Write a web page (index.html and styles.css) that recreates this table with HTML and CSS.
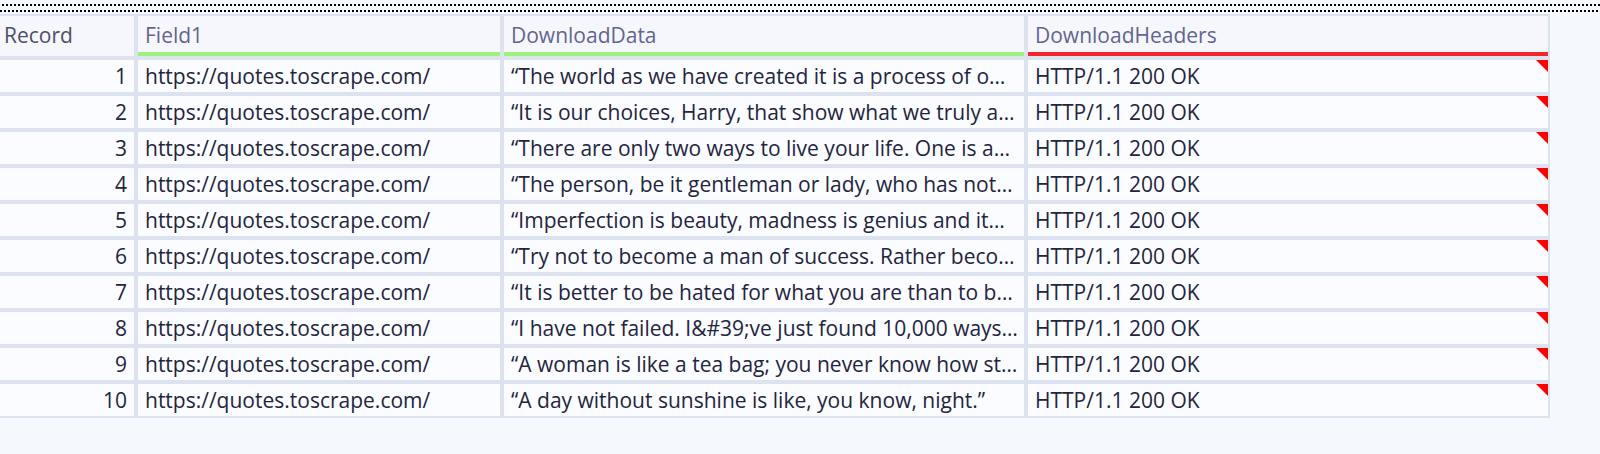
FILE: index.html
```html
<!DOCTYPE html>
<html lang="en">
<head>
<meta charset="utf-8">
<title>Results</title>
<link rel="stylesheet" href="styles.css">
</head>
<body>
<div class="dots dots-a"></div>
<div class="dots dots-b"></div>
<div class="grid">
  <div class="hcell rec">Record</div>
  <div class="hcell ok">Field1</div>
  <div class="hcell ok">DownloadData</div>
  <div class="hcell bad">DownloadHeaders</div>

  <div class="cell num">1</div><div class="cell">https://quotes.toscrape.com/</div><div class="cell">“The world as we have created it is a process of our thinking. It cannot be changed without changing our thinking.”</div><div class="cell flag">HTTP/1.1 200 OK</div>
  <div class="cell num">2</div><div class="cell">https://quotes.toscrape.com/</div><div class="cell">“It is our choices, Harry, that show what we truly are, far more than our abilities.”</div><div class="cell flag">HTTP/1.1 200 OK</div>
  <div class="cell num">3</div><div class="cell">https://quotes.toscrape.com/</div><div class="cell">“There are only two ways to live your life. One is as though nothing is a miracle. The other is as though everything is a miracle.”</div><div class="cell flag">HTTP/1.1 200 OK</div>
  <div class="cell num">4</div><div class="cell">https://quotes.toscrape.com/</div><div class="cell">“The person, be it gentleman or lady, who has not pleasure in a good novel, must be intolerably stupid.”</div><div class="cell flag">HTTP/1.1 200 OK</div>
  <div class="cell num">5</div><div class="cell">https://quotes.toscrape.com/</div><div class="cell">“Imperfection is beauty, madness is genius and it&amp;#39;s better to be absolutely ridiculous than absolutely boring.”</div><div class="cell flag">HTTP/1.1 200 OK</div>
  <div class="cell num">6</div><div class="cell">https://quotes.toscrape.com/</div><div class="cell">“Try not to become a man of success. Rather become a man of value.”</div><div class="cell flag">HTTP/1.1 200 OK</div>
  <div class="cell num">7</div><div class="cell">https://quotes.toscrape.com/</div><div class="cell">“It is better to be hated for what you are than to be loved for what you are not.”</div><div class="cell flag">HTTP/1.1 200 OK</div>
  <div class="cell num">8</div><div class="cell">https://quotes.toscrape.com/</div><div class="cell">“I have not failed. I&amp;#39;ve just found 10,000 ways that won&amp;#39;t work.”</div><div class="cell flag">HTTP/1.1 200 OK</div>
  <div class="cell num">9</div><div class="cell">https://quotes.toscrape.com/</div><div class="cell">“A woman is like a tea bag; you never know how strong it is until it&amp;#39;s in hot water.”</div><div class="cell flag">HTTP/1.1 200 OK</div>
  <div class="cell num">10</div><div class="cell">https://quotes.toscrape.com/</div><div class="cell">“A day without sunshine is like, you know, night.”</div><div class="cell flag">HTTP/1.1 200 OK</div>
</div>
</body>
</html>
```

FILE: styles.css
```css
html, body {
  margin: 0;
  padding: 0;
  background: #f5f8fd;
}
body {
  padding-top: 4px;
  font-family: "Open Sans", "Noto Sans", sans-serif;
  font-size: 21px;
}
.dots {
  height: 2px;
  width: 1600px;
}
.dots-a {
  background: repeating-linear-gradient(to right, transparent 0 2px, #000 2px 4px);
  margin-bottom: 4px;
}
.dots-b {
  background: repeating-linear-gradient(to right, #000 0 2px, transparent 2px 4px);
  margin-bottom: 2px;
}
.grid {
  display: grid;
  width: 1548px;
  grid-template-columns: 134px 362px 520px 520px;
  grid-template-rows: 40px;
  grid-auto-rows: 32px;
  gap: 4px;
  background: #dce3ee;
  padding: 2px 2px 2px 0;
}
.hcell {
  background: #f5f7fc;
  color: #64648e;
  line-height: 36px;
  padding: 1px 7px 0;
  white-space: nowrap;
  height: 40px;
  box-sizing: border-box;
}
.hcell.rec {
  color: #4e4e66;
  padding-left: 4px;
}
.hcell.ok {
  border-bottom: 4px solid #9ef27c;
}
.hcell.bad {
  border-bottom: 4px solid #f5262b;
}
.cell {
  background: #fafcff;
  color: #24243c;
  line-height: 32px;
  padding: 0 6px 0 7px;
  white-space: nowrap;
  overflow: hidden;
  text-overflow: ellipsis;
}
.cell.num {
  text-align: right;
  padding-right: 7px;
}
.cell.flag {
  position: relative;
}
.cell.flag::after {
  content: "";
  position: absolute;
  top: 0;
  right: 0;
  width: 0;
  height: 0;
  border-top: 12px solid #ff0000;
  border-left: 12px solid transparent;
}
```
